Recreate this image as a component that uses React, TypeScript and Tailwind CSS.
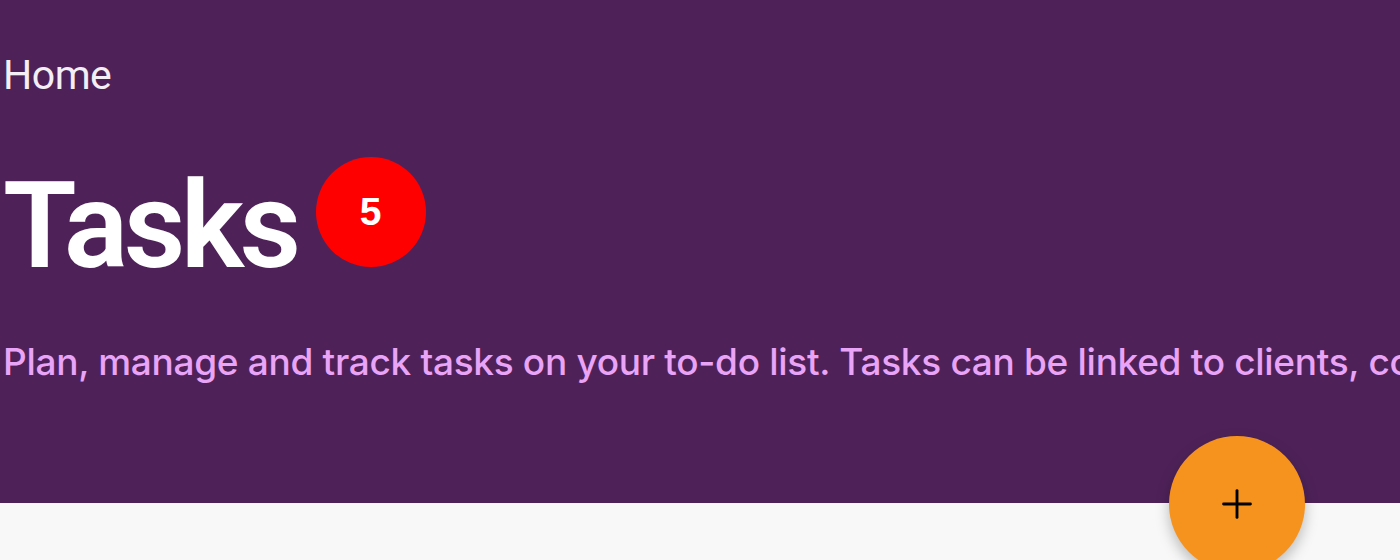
import { Plus } from 'lucide-react'

export default function App() {
  return (
    <div className="w-[1400px] h-[560px] overflow-hidden bg-[#f8f8f8] relative font-['Inter',sans-serif]">
      <header className="h-[503px] bg-[#4e2259] pl-[3px] pt-[51px] relative">
        <nav className="text-[41px] leading-[48px] text-[#f4eef5] font-['Roboto',sans-serif] tracking-[-0.5px]">
          Home
        </nav>
        <div className="flex items-center mt-[62px] gap-[19px]">
          <h1 className="text-[120px] leading-[130px] font-semibold text-white tracking-[-4.6px] font-['Roboto',sans-serif]">
            Tasks
          </h1>
          <span className="w-[110px] h-[110px] -mt-[28px] rounded-full bg-[#ff0000] flex items-center justify-center text-white font-bold text-[39px] font-['Liberation_Sans',sans-serif]">
            5
          </span>
        </div>
        <p className="mt-[47px] text-[37px] leading-[48px] font-medium text-[#eaa4f7] tracking-[-0.3px] whitespace-nowrap">
          Plan, manage and track tasks on your to-do list. Tasks can be linked to clients, contacts and projects.
        </p>
        <button className="absolute left-[1169px] top-[436px] w-[136px] h-[136px] rounded-full bg-[#f6921e] flex items-center justify-center shadow-[0_6px_14px_rgba(0,0,0,0.25)] z-10">
          <Plus className="w-[46px] h-[46px] text-black" strokeWidth={1.5} />
        </button>
      </header>
    </div>
  )
}
